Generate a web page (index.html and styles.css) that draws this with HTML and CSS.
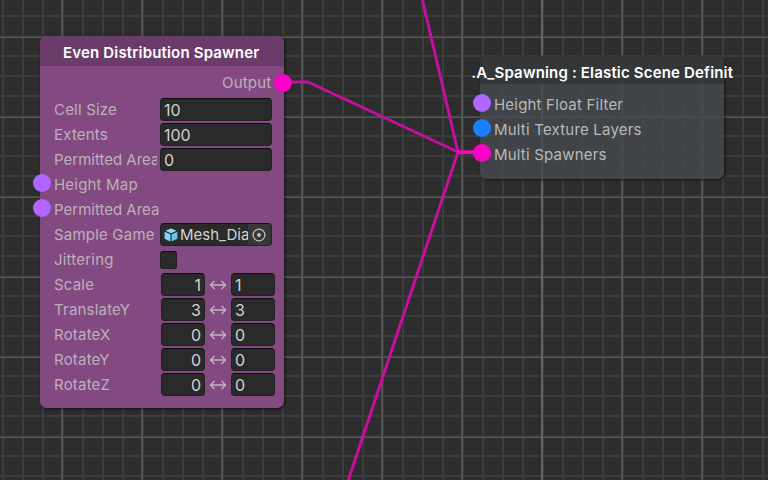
FILE: index.html
```html
<!DOCTYPE html>
<html lang="en">
<head>
<meta charset="utf-8">
<title>Elastic Scene Graph</title>
<link rel="stylesheet" href="styles.css">
</head>
<body>
<main class="canvas">
  <svg class="edges" width="768" height="480" viewBox="0 0 768 480">
    <path d="M283 82H308L458 152H482M421.500 -4L458 152M458 152L347 484"/>
    <path class="trunk" d="M457 152.300H482"/>
  </svg>

  <section class="node spawner">
    <h2>Even Distribution Spawner</h2>
    <div class="output">Output<i class="port out pink"></i></div>
    <div class="rows">
      <div class="row"><span class="label">Cell Size</span><span class="field">10</span></div>
      <div class="row"><span class="label">Extents</span><span class="field">100</span></div>
      <div class="row"><span class="label tight">Permitted Area</span><span class="field">0</span></div>
      <div class="row"><i class="port in violet"></i><span class="label wide">Height Map</span></div>
      <div class="row"><i class="port in violet"></i><span class="label wide tight">Permitted Area</span></div>
      <div class="row"><span class="label">Sample Game</span><span class="field object">
        <svg class="cube" width="14" height="14" viewBox="0 0 14 14"><path fill="#8cdcff" d="M7 .4L12.600 2.700L7 5.200L1.400 2.700Z"/><path fill="#7fd4fb" d="M.6 3.800L6.400 6.300V13.500L.6 10.700Z"/><path fill="#6cc3ec" d="M13.400 3.800L7.600 6.300V13.500L13.400 10.700Z"/></svg>
        <span class="name">Mesh_Dia</span>
        <span class="picker"><svg width="14" height="14" viewBox="0 0 14 14"><circle cx="7" cy="7" r="5.900" fill="none" stroke="#c4c4c4" stroke-width="1.200"/><circle cx="7" cy="7" r="1.900" fill="#c4c4c4"/></svg></span></span></div>
      <div class="row"><span class="label">Jittering</span><span class="check"></span></div>
      <div class="row range"><span class="label">Scale</span><span class="field min">1</span><svg class="arrow" viewBox="0 0 18 12"><path d="M1.500 6H16.500M5.500 2L1.500 6L5.500 10M12.500 2L16.500 6L12.500 10"/></svg><span class="field max">1</span></div>
      <div class="row range"><span class="label">TranslateY</span><span class="field min">3</span><svg class="arrow" viewBox="0 0 18 12"><path d="M1.500 6H16.500M5.500 2L1.500 6L5.500 10M12.500 2L16.500 6L12.500 10"/></svg><span class="field max">3</span></div>
      <div class="row range"><span class="label">RotateX</span><span class="field min">0</span><svg class="arrow" viewBox="0 0 18 12"><path d="M1.500 6H16.500M5.500 2L1.500 6L5.500 10M12.500 2L16.500 6L12.500 10"/></svg><span class="field max">0</span></div>
      <div class="row range"><span class="label">RotateY</span><span class="field min">0</span><svg class="arrow" viewBox="0 0 18 12"><path d="M1.500 6H16.500M5.500 2L1.500 6L5.500 10M12.500 2L16.500 6L12.500 10"/></svg><span class="field max">0</span></div>
      <div class="row range"><span class="label">RotateZ</span><span class="field min">0</span><svg class="arrow" viewBox="0 0 18 12"><path d="M1.500 6H16.500M5.500 2L1.500 6L5.500 10M12.500 2L16.500 6L12.500 10"/></svg><span class="field max">0</span></div>
    </div>
  </section>

  <section class="node scene">
    <h2><span>.A_Spawning : Elastic Scene Definit</span></h2>
    <div class="rows">
      <div class="row"><i class="port in violet"></i><span class="label wide">Height Float Filter</span></div>
      <div class="row"><i class="port in blue"></i><span class="label wide">Multi Texture Layers</span></div>
      <div class="row"><i class="port in pink"></i><span class="label wide">Multi Spawners</span></div>
    </div>
  </section>
</main>
</body>
</html>
```
FILE: styles.css
```css
* { box-sizing: border-box; }
body { margin: 0; }

.canvas {
  position: relative;
  width: 768px;
  height: 480px;
  overflow: hidden;
  font: 15px/20px Inter, "Liberation Sans", sans-serif;
  letter-spacing: 0.2px;
  color: #bdb0bd;
  background-color: #2d2d2d;
  background-image:
    linear-gradient(#636363, #636363),
    linear-gradient(90deg, #525252 2px, transparent 2px),
    linear-gradient(#303030 1px, #484848 1px, #484848 2px, #575757 2px, #575757 3px, transparent 3px),
    linear-gradient(90deg, #3c3c3c 2px, transparent 2px),
    linear-gradient(#3c3c3c 2px, transparent 2px);
  background-size: 2px 480px, 80px 80px, 80px 80px, 20px 20px, 20px 20px;
  background-position: 541px 0, 61px 0, 0 35px, 2px 0, 0 15px;
  background-repeat: no-repeat, repeat, repeat, repeat, repeat;
}

.edges { position: absolute; inset: 0; }
.edges path { fill: none; stroke: #c50fa0; stroke-width: 3; stroke-linejoin: round; }
.edges .trunk { stroke: #f404c4; stroke-width: 3.600; }

/* Nodes sit freely on the graph canvas. */
.node {
  position: absolute;
  border-radius: 7px;
  box-shadow: 1px 1px 3px rgba(0, 0, 0, 0.6);
}
.node h2 {
  display: flex;
  justify-content: center;
  align-items: center;
  margin: 0;
  border-radius: 7px 7px 0 0;
  font-size: 15px;
  font-weight: 600;
  letter-spacing: 0.17px;
  color: #fff;
  white-space: nowrap;
}

.spawner { left: 40px; top: 36px; width: 244.400px; height: 372px; background: #834a81; }
.spawner h2 { height: 30px; padding: 5px 2px 0 0; background: #6b3c6a; border-bottom: 1px solid #673965; }
.scene { left: 480px; top: 56px; width: 244.400px; height: 122.500px; background: rgba(68, 73, 78, 0.82); }
.scene h2 { height: 28px; padding-top: 6px; background: rgba(48, 52, 55, 0.8); }
.scene h2 span { flex: none; }

.output {
  display: flex;
  align-items: center;
  justify-content: flex-end;
  height: 31px;
  padding: 3px 13px 0 0;
  position: relative;
}
.rows { padding-left: 14px; }
.row { position: relative; display: flex; align-items: center; height: 25px; }
.scene .rows { padding-top: 8px; }
.scene .row { color: #b9b9b9; }

.label { flex: none; width: 103px; margin-right: 3px; padding-top: 1px; overflow: hidden; white-space: nowrap; }
.label.wide { width: auto; }
.label.tight { letter-spacing: 0; }

.field {
  width: 112px;
  height: 23px;
  padding: 1px 3px 0;
  border: 1px solid #212121;
  border-top-color: #0d0d0d;
  border-radius: 4px;
  background: #2a2a2a;
  color: #d2d2d2;
  line-height: 20px;
  font-size: 16px;
  letter-spacing: 0;
  white-space: nowrap;
}
.range .field { width: 44px; }
.range .label { margin-right: 4px; }
.range .min { text-align: right; }
.arrow { width: 18px; height: 12px; margin: 1px 4px 0; fill: none; stroke: #c4b5c4; stroke-width: 1.300; }

.object { display: flex; align-items: center; padding: 0 0 0 3px; overflow: hidden; }
.cube { flex: none; margin-right: 2px; }
.name { width: 68px; flex: none; font-size: 15px; letter-spacing: 0; }
.picker { display: flex; flex: 1; align-items: center; justify-content: center; height: 21px; padding-right: 1px; background: #373737; }

.check { width: 17px; height: 18px; border: 1px solid #1f1f1f; border-top-color: #0d0d0d; border-radius: 3px; background: #2a2a2a; }

.port { position: absolute; width: 18px; height: 18px; border-radius: 50%; }
.in { left: -21.500px; top: 2px; }
.out { right: -7.500px; top: 8px; }
.pink { background: #ff00c8; }
.violet { background: #b066ff; }
.blue { background: #1a80ff; }
```
